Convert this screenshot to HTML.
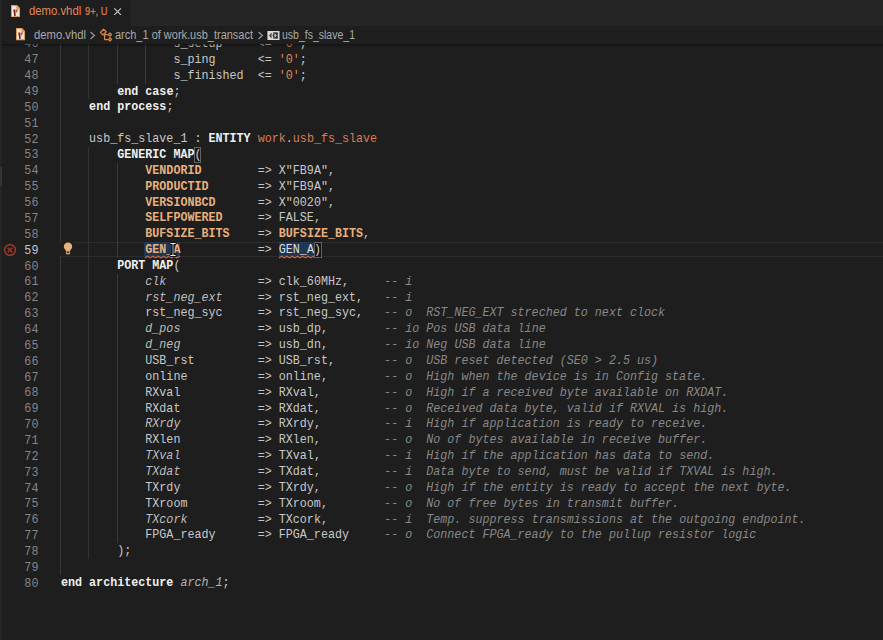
<!DOCTYPE html>
<html><head><meta charset="utf-8">
<style>
html,body{margin:0;padding:0;}
body{width:883px;height:640px;overflow:hidden;background:#1e1e1e;position:relative;font-family:"Liberation Mono",monospace;}
.strip{position:absolute;left:0;top:0;width:2px;height:640px;background:#242424;}
.sbar{position:absolute;left:0;top:167px;width:2px;height:19px;background:#343434;}
.tabs{position:absolute;left:2px;top:0;width:881px;height:26px;background:#252526;}
.tab{position:absolute;left:0;top:0;width:129px;height:26px;background:#1e1e1e;}
.ui{position:absolute;font-family:"Liberation Sans",sans-serif;font-size:12.5px;white-space:pre;transform-origin:0 0;line-height:15px;}
.bc{position:absolute;left:2px;top:26px;width:881px;height:18px;background:#1e1e1e;font-family:"Liberation Sans",sans-serif;font-size:11.5px;color:#a8a8a8;}
.bc span{position:absolute;top:2px;white-space:pre;}
.shadow{position:absolute;left:2px;top:44px;width:881px;height:4px;background:linear-gradient(rgba(0,0,0,0.42),rgba(0,0,0,0.12) 50%,rgba(0,0,0,0));z-index:5;}
.editor{position:absolute;left:0;top:44px;width:883px;height:596px;overflow:hidden;}
.inner{position:absolute;left:0;top:-44px;width:883px;height:640px;}
.ln{position:absolute;left:61px;height:15.86px;line-height:15.86px;white-space:pre;font-size:13px;color:#c8c8c8;z-index:2;transform:scaleX(0.90036);transform-origin:0 0;}
.num{position:absolute;left:24px;width:16px;text-align:right;height:15.86px;line-height:15.86px;font-size:13px;color:#858585;transform:scaleX(0.90036);transform-origin:0 0;}
.num.act{color:#c6c6c6;}
.gd{position:absolute;width:1px;background:#3a3a3a;z-index:1;}
.gd.g2{background:#333333;}
.k{font-weight:bold;color:#f0f0f0;}
.c{font-weight:bold;color:#e8b07e;}
.n{color:#e0884f;}
.w{color:#dc7c52;}
.op{color:#c4c4c4;}
.i{font-style:italic;color:#bdbdbd;}
.ia{font-style:italic;color:#b4b4b4;}
.cm{font-style:italic;color:#878787;}
.hl{}
.hl2{color:#dedede;}
.bm{}
.box{position:absolute;z-index:1;}
.curline{position:absolute;left:61px;top:242px;width:822px;height:13px;border-top:1px solid #2c2c2c;border-bottom:1px solid #2c2c2c;}
</style></head><body>
<div class="strip"></div><div class="sbar"></div>
<div class="tabs"><div class="tab"></div></div>
<div class="ui" style="left:29px;top:4px;color:#e2875b;transform:scaleX(0.905)">demo.vhdl</div><div class="ui" style="left:84.5px;top:4px;font-size:10.8px;color:#de7a4e;transform:scaleX(0.86);-webkit-text-stroke:0.25px #de7a4e">9+, U</div>
<div class="bc"></div>
<div class="ui" style="left:34px;top:28px;color:#a9a9a9;transform:scaleX(0.90)">demo.vhdl</div>
<div class="ui" style="left:114.5px;top:28px;color:#a9a9a9;transform:scaleX(0.879)">arch_1 of work.usb_transact</div>
<div class="ui" style="left:281.5px;top:28px;color:#a9a9a9;transform:scaleX(0.84)">usb_fs_slave_1</div>
<svg style="position:absolute;left:89px;top:31px" width="8" height="9" viewBox="0 0 8 9"><path d="M1.5,1 L5.5,4.5 L1.5,8" fill="none" stroke="#a0a0a0" stroke-width="1.1"/></svg>
<svg style="position:absolute;left:257px;top:31px" width="8" height="9" viewBox="0 0 8 9"><path d="M1.5,1 L5.5,4.5 L1.5,8" fill="none" stroke="#a0a0a0" stroke-width="1.1"/></svg>

<div style="position:absolute;left:11px;top:5px;width:10px;height:13px;line-height:0"><svg width="9.4" height="12.4" viewBox="0 0 10 13"><path d="M0.6,0.6 H6.2 L9.4,3.8 V12.4 H0.6 Z" fill="#f0e6cf" stroke="#e39656" stroke-width="1.2"/><path d="M1.3,1.3 H3.6 V11.8 H1.3 Z" fill="#f2f4ee"/><path d="M6.2,0.6 V3.8 H9.4 Z" fill="#e2a066" stroke="#e39656" stroke-width="0.8"/><path d="M2.4,4.6 L4.6,4.6 L5.0,11.6 L3.4,11.6 Z" fill="#7e2014"/><path d="M5.5,4.8 L7.6,4.8 L5.6,8.6 Z" fill="#a83620"/></svg></div>
<div style="position:absolute;left:15.8px;top:28.2px;width:10px;height:13px;line-height:0"><svg width="9.4" height="12.4" viewBox="0 0 10 13"><path d="M0.6,0.6 H6.2 L9.4,3.8 V12.4 H0.6 Z" fill="#f0e6cf" stroke="#e39656" stroke-width="1.2"/><path d="M1.3,1.3 H3.6 V11.8 H1.3 Z" fill="#f2f4ee"/><path d="M6.2,0.6 V3.8 H9.4 Z" fill="#e2a066" stroke="#e39656" stroke-width="0.8"/><path d="M2.4,4.6 L4.6,4.6 L5.0,11.6 L3.4,11.6 Z" fill="#7e2014"/><path d="M5.5,4.8 L7.6,4.8 L5.6,8.6 Z" fill="#a83620"/></svg></div>
<svg style="position:absolute;left:113px;top:7px" width="9" height="9" viewBox="0 0 9 9"><path d="M1.3,1.3 L7.9,7.9 M7.9,1.3 L1.3,7.9" stroke="#c4c4c4" stroke-width="1.2"/></svg>
<svg style="position:absolute;left:99px;top:28px" width="14" height="14" viewBox="0 0 14 14"><g fill="none" stroke="#d88646" stroke-width="1.25" stroke-linejoin="round"><path d="M1.4,4.4 L4.6,1.2 L7.2,3.8 L4.0,7.0 Z"/><path d="M5.6,5.6 L5.6,11.6 H9.6 M5.6,6.6 H9.6"/><path d="M9.4,6.6 L11,5.0 L12.6,6.6 L11,8.2 Z"/><path d="M9.4,11.4 L11,9.8 L12.6,11.4 L11,13.0 Z"/></g></svg>
<svg style="position:absolute;left:267px;top:30.5px" width="13" height="9" viewBox="0 0 13 9"><rect x="0" y="0" width="13" height="9" fill="#dcdad2"/><rect x="0" y="0" width="1" height="9" fill="#7090b8"/><rect x="12" y="0" width="1" height="9" fill="#a86c48"/><path d="M2,4.5 L4.6,1.6 L4.6,7.4 Z" fill="#4a3c34"/><rect x="3.8" y="3.8" width="5" height="1.4" fill="#8a8a8a"/><rect x="6.2" y="1.4" width="4.6" height="6.2" fill="#1c2436"/><path d="M7.4,2 L10,4.5 L7.4,7 Z" fill="#b8c4d0"/></svg>
<svg style="position:absolute;left:3px;top:243px" width="14" height="14" viewBox="0 0 14 14"><circle cx="7" cy="7" r="5.4" fill="none" stroke="#993626" stroke-width="1.6"/><path d="M4.7,4.7 L9.3,9.3 M9.3,4.7 L4.7,9.3" stroke="#993626" stroke-width="1.6"/></svg>
<div style="position:absolute;left:56px;top:242px;width:17px;height:14px;background:#1e1e1e;z-index:3"></div><svg style="position:absolute;left:63px;top:242px;z-index:4" width="10" height="13" viewBox="0 0 10 13"><path d="M5,0.6 C2.5,0.6 0.8,2.4 0.8,4.6 C0.8,6.2 1.7,7.2 2.5,8.0 L2.8,9.0 H7.2 L7.5,8.0 C8.3,7.2 9.2,6.2 9.2,4.6 C9.2,2.4 7.5,0.6 5,0.6 Z" fill="#e6b27c"/><path d="M2.9,9.2 H7.1 V11.4 L6.2,12.4 H3.8 L2.9,11.4 Z" fill="#d6945e"/><path d="M4,9.8 H6 V10.9 H4 Z" fill="#3a2a20"/></svg>
<div class="shadow"></div>
<div class="editor"><div class="inner">
<div class="curline"></div>
<div class="box" style="left:144px;top:242px;width:36px;height:16px;background:#1f3655"></div>
<div class="box" style="left:279px;top:242px;width:35px;height:16px;background:#1f3655"></div>
<div class="box" style="left:194px;top:147px;width:5px;height:14px;border:1px solid #616161;background:#191919"></div>
<div class="box" style="left:314px;top:242px;width:6px;height:14px;border:1px solid #616161;background:#151515"></div>

<svg style="position:absolute;left:144.5px;top:254.5px;z-index:3" width="35.5" height="4"><defs><pattern id="sq" width="5.3" height="4" patternUnits="userSpaceOnUse"><path d="M-0.2,3.1 L2.65,1.0 L5.5,3.1" fill="none" stroke="#d86a3c" stroke-width="0.95"/></pattern></defs><rect width="35" height="4" fill="url(#sq)"/></svg>
<svg style="position:absolute;left:278.5px;top:254.5px;z-index:3" width="35" height="4"><rect width="35" height="4" fill="url(#sq)"/></svg>
<svg style="position:absolute;left:169px;top:241px;z-index:4" width="8" height="17" viewBox="0 0 8 17"><path d="M1,1.5 H7 V3.5 H5 V13.5 H7 V15.5 H1 V13.5 H3 V3.5 H1 Z" fill="#9a9a9a" stroke="#000" stroke-width="0.8"/><path d="M1.5,2 H6.5 V3 H1.5 Z M1.5,14 H6.5 V15 H1.5 Z" fill="#e8e8e8"/></svg>

<div class="ln" style="top:36px">                s_setup     <span class="op">&lt;=</span> <span class="n">&#x27;0&#x27;</span>;</div>
<div class="num" style="top:36px">46</div>
<div class="gd" style="top:36px;left:60px;height:16px"></div>
<div class="gd g2" style="top:36px;left:88px;height:16px"></div>
<div class="gd" style="top:36px;left:117px;height:16px"></div>
<div class="gd" style="top:36px;left:145px;height:16px"></div>
<div class="ln" style="top:52px">                s_ping      <span class="op">&lt;=</span> <span class="n">&#x27;0&#x27;</span>;</div>
<div class="num" style="top:52px">47</div>
<div class="gd" style="top:52px;left:60px;height:16px"></div>
<div class="gd g2" style="top:52px;left:88px;height:16px"></div>
<div class="gd" style="top:52px;left:117px;height:16px"></div>
<div class="gd" style="top:52px;left:145px;height:16px"></div>
<div class="ln" style="top:68px">                s_finished  <span class="op">&lt;=</span> <span class="n">&#x27;0&#x27;</span>;</div>
<div class="num" style="top:68px">48</div>
<div class="gd" style="top:68px;left:60px;height:16px"></div>
<div class="gd g2" style="top:68px;left:88px;height:16px"></div>
<div class="gd" style="top:68px;left:117px;height:16px"></div>
<div class="gd" style="top:68px;left:145px;height:16px"></div>
<div class="ln" style="top:84px">        <span class="k">end</span> <span class="k">case</span>;</div>
<div class="num" style="top:84px">49</div>
<div class="gd" style="top:84px;left:60px;height:15px"></div>
<div class="gd g2" style="top:84px;left:88px;height:15px"></div>
<div class="ln" style="top:99px">    <span class="k">end</span> <span class="k">process</span>;</div>
<div class="num" style="top:100px">50</div>
<div class="gd" style="top:99px;left:60px;height:16px"></div>
<div class="ln" style="top:115px"></div>
<div class="num" style="top:116px">51</div>
<div class="gd" style="top:115px;left:60px;height:16px"></div>
<div class="ln" style="top:131px">    usb_fs_slave_1 : <span class="k">ENTITY</span> <span class="w">work</span>.<span class="w">usb_fs_slave</span></div>
<div class="num" style="top:132px">52</div>
<div class="gd" style="top:131px;left:60px;height:16px"></div>
<div class="ln" style="top:147px">        <span class="k">GENERIC MAP</span><span class="bm">(</span></div>
<div class="num" style="top:147px">53</div>
<div class="gd" style="top:147px;left:60px;height:16px"></div>
<div class="gd g2" style="top:147px;left:88px;height:16px"></div>
<div class="ln" style="top:163px">            <span class="c">VENDORID</span>        <span class="op">=&gt;</span> X&quot;FB9A&quot;,</div>
<div class="num" style="top:163px">54</div>
<div class="gd" style="top:163px;left:60px;height:16px"></div>
<div class="gd g2" style="top:163px;left:88px;height:16px"></div>
<div class="gd" style="top:163px;left:117px;height:16px"></div>
<div class="ln" style="top:179px">            <span class="c">PRODUCTID</span>       <span class="op">=&gt;</span> X&quot;FB9A&quot;,</div>
<div class="num" style="top:179px">55</div>
<div class="gd" style="top:179px;left:60px;height:16px"></div>
<div class="gd g2" style="top:179px;left:88px;height:16px"></div>
<div class="gd" style="top:179px;left:117px;height:16px"></div>
<div class="ln" style="top:195px">            <span class="c">VERSIONBCD</span>      <span class="op">=&gt;</span> X&quot;0020&quot;,</div>
<div class="num" style="top:195px">56</div>
<div class="gd" style="top:195px;left:60px;height:15px"></div>
<div class="gd g2" style="top:195px;left:88px;height:15px"></div>
<div class="gd" style="top:195px;left:117px;height:15px"></div>
<div class="ln" style="top:210px">            <span class="c">SELFPOWERED</span>     <span class="op">=&gt;</span> FALSE,</div>
<div class="num" style="top:211px">57</div>
<div class="gd" style="top:210px;left:60px;height:16px"></div>
<div class="gd g2" style="top:210px;left:88px;height:16px"></div>
<div class="gd" style="top:210px;left:117px;height:16px"></div>
<div class="ln" style="top:226px">            <span class="c">BUFSIZE_BITS</span>    <span class="op">=&gt;</span> <span class="c">BUFSIZE_BITS</span>,</div>
<div class="num" style="top:227px">58</div>
<div class="gd" style="top:226px;left:60px;height:16px"></div>
<div class="gd g2" style="top:226px;left:88px;height:16px"></div>
<div class="gd" style="top:226px;left:117px;height:16px"></div>
<div class="ln" style="top:242px">            <span class="c hl">GEN_A</span>           <span class="op">=&gt;</span> <span class="hl2">GEN_A</span><span class="bm">)</span></div>
<div class="num act" style="top:243px">59</div>
<div class="gd" style="top:242px;left:60px;height:16px"></div>
<div class="gd g2" style="top:242px;left:88px;height:16px"></div>
<div class="gd" style="top:242px;left:117px;height:16px"></div>
<div class="ln" style="top:258px">        <span class="k">PORT MAP</span>(</div>
<div class="num" style="top:259px">60</div>
<div class="gd" style="top:258px;left:60px;height:16px"></div>
<div class="gd g2" style="top:258px;left:88px;height:16px"></div>
<div class="ln" style="top:274px">            <span class="i">clk</span>             <span class="op">=&gt;</span> clk_60MHz,     <span class="cm">-- i</span></div>
<div class="num" style="top:274px">61</div>
<div class="gd" style="top:274px;left:60px;height:16px"></div>
<div class="gd g2" style="top:274px;left:88px;height:16px"></div>
<div class="gd" style="top:274px;left:117px;height:16px"></div>
<div class="ln" style="top:290px">            <span class="i">rst_neg_ext</span>     <span class="op">=&gt;</span> rst_neg_ext,   <span class="cm">-- i</span></div>
<div class="num" style="top:290px">62</div>
<div class="gd" style="top:290px;left:60px;height:15px"></div>
<div class="gd g2" style="top:290px;left:88px;height:15px"></div>
<div class="gd" style="top:290px;left:117px;height:15px"></div>
<div class="ln" style="top:305px">            rst_neg_syc     <span class="op">=&gt;</span> rst_neg_syc,   <span class="cm">-- o  RST_NEG_EXT streched to next clock</span></div>
<div class="num" style="top:306px">63</div>
<div class="gd" style="top:305px;left:60px;height:16px"></div>
<div class="gd g2" style="top:305px;left:88px;height:16px"></div>
<div class="gd" style="top:305px;left:117px;height:16px"></div>
<div class="ln" style="top:321px">            <span class="i">d_pos</span>           <span class="op">=&gt;</span> usb_dp,        <span class="cm">-- io Pos USB data line</span></div>
<div class="num" style="top:322px">64</div>
<div class="gd" style="top:321px;left:60px;height:16px"></div>
<div class="gd g2" style="top:321px;left:88px;height:16px"></div>
<div class="gd" style="top:321px;left:117px;height:16px"></div>
<div class="ln" style="top:337px">            <span class="i">d_neg</span>           <span class="op">=&gt;</span> usb_dn,        <span class="cm">-- io Neg USB data line</span></div>
<div class="num" style="top:338px">65</div>
<div class="gd" style="top:337px;left:60px;height:16px"></div>
<div class="gd g2" style="top:337px;left:88px;height:16px"></div>
<div class="gd" style="top:337px;left:117px;height:16px"></div>
<div class="ln" style="top:353px">            USB_rst         <span class="op">=&gt;</span> USB_rst,       <span class="cm">-- o  USB reset detected (SE0 &gt; 2.5 us)</span></div>
<div class="num" style="top:354px">66</div>
<div class="gd" style="top:353px;left:60px;height:16px"></div>
<div class="gd g2" style="top:353px;left:88px;height:16px"></div>
<div class="gd" style="top:353px;left:117px;height:16px"></div>
<div class="ln" style="top:369px">            online          <span class="op">=&gt;</span> online,        <span class="cm">-- o  High when the device is in Config state.</span></div>
<div class="num" style="top:370px">67</div>
<div class="gd" style="top:369px;left:60px;height:16px"></div>
<div class="gd g2" style="top:369px;left:88px;height:16px"></div>
<div class="gd" style="top:369px;left:117px;height:16px"></div>
<div class="ln" style="top:385px">            RXval           <span class="op">=&gt;</span> RXval,         <span class="cm">-- o  High if a received byte available on RXDAT.</span></div>
<div class="num" style="top:385px">68</div>
<div class="gd" style="top:385px;left:60px;height:16px"></div>
<div class="gd g2" style="top:385px;left:88px;height:16px"></div>
<div class="gd" style="top:385px;left:117px;height:16px"></div>
<div class="ln" style="top:401px">            RXdat           <span class="op">=&gt;</span> RXdat,         <span class="cm">-- o  Received data byte, valid if RXVAL is high.</span></div>
<div class="num" style="top:401px">69</div>
<div class="gd" style="top:401px;left:60px;height:15px"></div>
<div class="gd g2" style="top:401px;left:88px;height:15px"></div>
<div class="gd" style="top:401px;left:117px;height:15px"></div>
<div class="ln" style="top:416px">            <span class="i">RXrdy</span>           <span class="op">=&gt;</span> RXrdy,         <span class="cm">-- i  High if application is ready to receive.</span></div>
<div class="num" style="top:417px">70</div>
<div class="gd" style="top:416px;left:60px;height:16px"></div>
<div class="gd g2" style="top:416px;left:88px;height:16px"></div>
<div class="gd" style="top:416px;left:117px;height:16px"></div>
<div class="ln" style="top:432px">            RXlen           <span class="op">=&gt;</span> RXlen,         <span class="cm">-- o  No of bytes available in receive buffer.</span></div>
<div class="num" style="top:433px">71</div>
<div class="gd" style="top:432px;left:60px;height:16px"></div>
<div class="gd g2" style="top:432px;left:88px;height:16px"></div>
<div class="gd" style="top:432px;left:117px;height:16px"></div>
<div class="ln" style="top:448px">            <span class="i">TXval</span>           <span class="op">=&gt;</span> TXval,         <span class="cm">-- i  High if the application has data to send.</span></div>
<div class="num" style="top:449px">72</div>
<div class="gd" style="top:448px;left:60px;height:16px"></div>
<div class="gd g2" style="top:448px;left:88px;height:16px"></div>
<div class="gd" style="top:448px;left:117px;height:16px"></div>
<div class="ln" style="top:464px">            <span class="i">TXdat</span>           <span class="op">=&gt;</span> TXdat,         <span class="cm">-- i  Data byte to send, must be valid if TXVAL is high.</span></div>
<div class="num" style="top:465px">73</div>
<div class="gd" style="top:464px;left:60px;height:16px"></div>
<div class="gd g2" style="top:464px;left:88px;height:16px"></div>
<div class="gd" style="top:464px;left:117px;height:16px"></div>
<div class="ln" style="top:480px">            TXrdy           <span class="op">=&gt;</span> TXrdy,         <span class="cm">-- o  High if the entity is ready to accept the next byte.</span></div>
<div class="num" style="top:481px">74</div>
<div class="gd" style="top:480px;left:60px;height:16px"></div>
<div class="gd g2" style="top:480px;left:88px;height:16px"></div>
<div class="gd" style="top:480px;left:117px;height:16px"></div>
<div class="ln" style="top:496px">            TXroom          <span class="op">=&gt;</span> TXroom,        <span class="cm">-- o  No of free bytes in transmit buffer.</span></div>
<div class="num" style="top:496px">75</div>
<div class="gd" style="top:496px;left:60px;height:16px"></div>
<div class="gd g2" style="top:496px;left:88px;height:16px"></div>
<div class="gd" style="top:496px;left:117px;height:16px"></div>
<div class="ln" style="top:512px">            <span class="i">TXcork</span>          <span class="op">=&gt;</span> TXcork,        <span class="cm">-- i  Temp. suppress transmissions at the outgoing endpoint.</span></div>
<div class="num" style="top:512px">76</div>
<div class="gd" style="top:512px;left:60px;height:15px"></div>
<div class="gd g2" style="top:512px;left:88px;height:15px"></div>
<div class="gd" style="top:512px;left:117px;height:15px"></div>
<div class="ln" style="top:527px">            FPGA_ready      <span class="op">=&gt;</span> FPGA_ready     <span class="cm">-- o  Connect FPGA_ready to the pullup resistor logic</span></div>
<div class="num" style="top:528px">77</div>
<div class="gd" style="top:527px;left:60px;height:16px"></div>
<div class="gd g2" style="top:527px;left:88px;height:16px"></div>
<div class="gd" style="top:527px;left:117px;height:16px"></div>
<div class="ln" style="top:543px">        );</div>
<div class="num" style="top:544px">78</div>
<div class="gd" style="top:543px;left:60px;height:16px"></div>
<div class="gd g2" style="top:543px;left:88px;height:16px"></div>
<div class="ln" style="top:559px"></div>
<div class="num" style="top:560px">79</div>
<div class="gd" style="top:559px;left:60px;height:16px"></div>
<div class="ln" style="top:575px"><span class="k">end architecture</span> <span class="ia">arch_1</span>;</div>
<div class="num" style="top:576px">80</div>
</div></div>
</body></html>
